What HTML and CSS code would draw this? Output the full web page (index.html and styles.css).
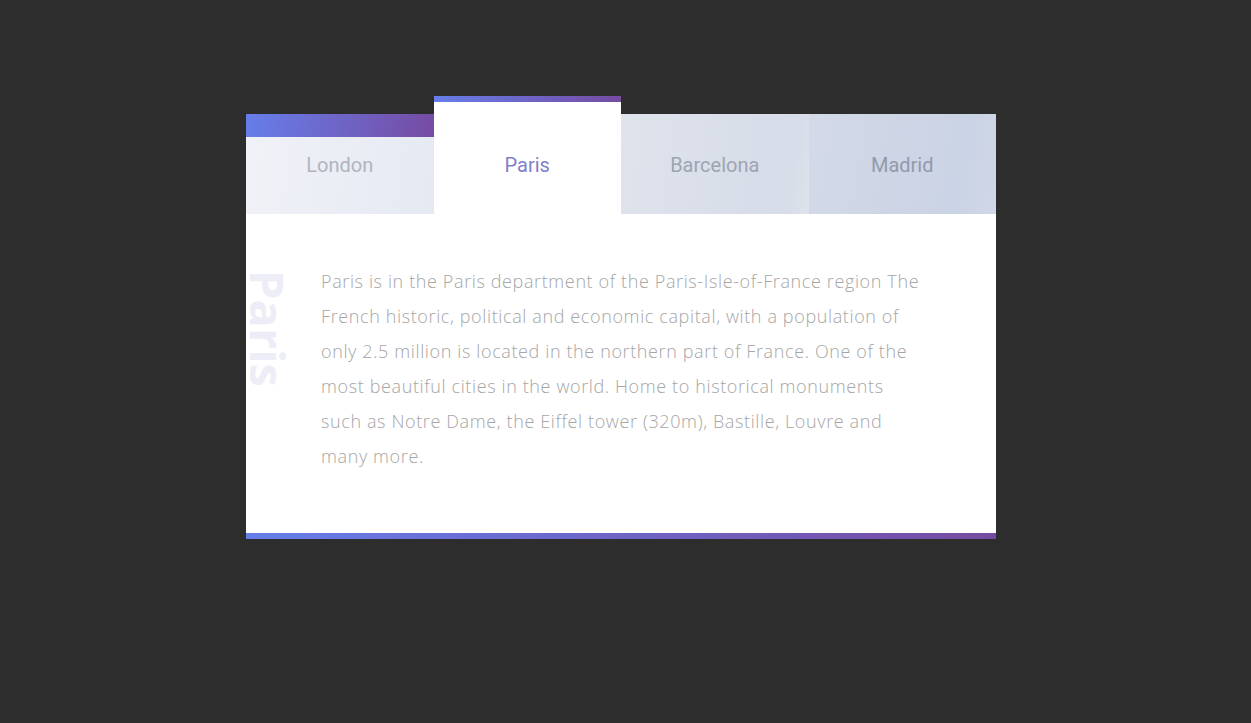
FILE: index.html
```html
<!DOCTYPE html>
<html lang="en">
<head>
<meta charset="utf-8">
<title>Cities</title>
<link rel="stylesheet" href="styles.css">
</head>
<body>
<div class="card">
  <div class="tabs">
    <div class="tab tab-london"><span class="stripe"></span><span class="label">London</span></div>
    <div class="tab tab-paris active"><span class="label">Paris</span></div>
    <div class="tab tab-barcelona"><span class="label">Barcelona</span></div>
    <div class="tab tab-madrid"><span class="label">Madrid</span></div>
  </div>
  <div class="content">
    <div class="vertical-title">Paris</div>
    <p class="text">Paris is in the Paris department of the Paris-Isle-of-France region The French historic, political and economic capital, with a population of only 2.5 million is located in the northern part of France. One of the most beautiful cities in the world. Home to historical monuments such as Notre Dame, the Eiffel tower (320m), Bastille, Louvre and many more.</p>
  </div>
</div>
</body>
</html>
```

FILE: styles.css
```css
html, body {
  margin: 0;
  padding: 0;
  background: #2d2d2d;
}
body {
  font-family: Roboto, "Liberation Sans", sans-serif;
  width: 1251px;
  height: 723px;
  overflow: hidden;
}
.card {
  width: 750px;
  margin: 96px 0 0 246px;
}
.tabs {
  display: flex;
  align-items: flex-end;
  height: 118px;
}
.tab {
  position: relative;
  flex: 1 1 0;
  height: 100px;
  display: flex;
  align-items: center;
  justify-content: center;
  font-size: 20px;
  font-weight: 400;
  box-sizing: border-box;
  padding-top: 2px;
}
.label {
  position: relative;
}
.tab-london {
  background: linear-gradient(100deg, #f0f2f7 0%, #e5e9f2 100%);
  color: #b1b4be;
}
.tab-london .stripe {
  position: absolute;
  left: 0;
  top: 0;
  right: 0;
  height: 23px;
  background: linear-gradient(100deg, #667eea 0%, #764ba2 100%);
}
.tab-paris {
  height: 118px;
  background: #fff;
  border-top: 6px solid #6a72d8;
  border-image: linear-gradient(to right, #667eea, #764ba2) 1;
  color: #7f80c9;
  padding-top: 14px;
}
.tab-barcelona {
  background: linear-gradient(100deg, #dfe3ec 0%, #d6dce8 85%, #dde2eb 100%);
  color: #9ea4b2;
}
.tab-madrid {
  background: linear-gradient(100deg, #d3d9e7 0%, #cad3e5 80%, #d0d8e7 100%);
  color: #939aa9;
}
.content {
  position: relative;
  background: #fff;
  padding: 50px 75px 59px 75px;
  border-bottom: 6px solid #6a72d8;
  border-image: linear-gradient(to right, #667eea, #764ba2) 1;
}
.vertical-title {
  position: absolute;
  left: -1px;
  top: 56px;
  writing-mode: vertical-rl;
  font-family: "Open Sans", sans-serif;
  font-weight: 700;
  font-size: 47px;
  line-height: 46px;
  color: #ededf7;
}
.text {
  position: relative;
  margin: 0;
  font-family: "Open Sans", sans-serif;
  font-size: 18px;
  font-weight: 300;
  letter-spacing: 0.62px;
  line-height: 35px;
  color: #a6a6a6;
}
```
